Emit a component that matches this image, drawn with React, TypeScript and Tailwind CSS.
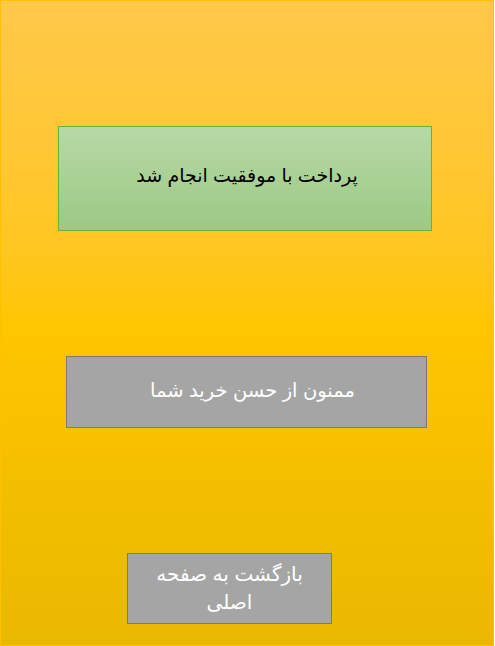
export default function App() {
  return (
    <div
      dir="rtl"
      className="relative w-[494px] h-[646px] border border-[#ffc000] bg-gradient-to-b from-[#ffc848] via-[#ffc600] to-[#e9b800] flex flex-col"
      style={{ fontFamily: '"Liberation Sans", "DejaVu Sans", Arial, sans-serif' }}
    >
      <div dir="ltr" className="flex flex-col pt-[125px]">
        <div className="ml-[57px] w-[374px] h-[105px] border border-[#6aaf4a] bg-gradient-to-b from-[#b7d8a6] to-[#9bca84] flex items-center justify-center">
          <span dir="rtl" className="text-[19px] text-black pl-[4px] pb-[5px]">پرداخت با موفقیت انجام شد</span>
        </div>
        <div className="ml-[65px] mt-[125px] w-[361px] h-[72px] border border-[#7a7a7a] bg-[#a5a5a5] flex items-center justify-center">
          <span dir="rtl" className="text-[19.5px] text-white pl-[12px] pb-[2px]">ممنون از حسن خرید شما</span>
        </div>
        <div className="ml-[126px] mt-[125px] w-[205px] h-[71px] border border-[#7a7a7a] bg-[#a5a5a5] flex items-center justify-center">
          <span dir="rtl" className="text-[20px] leading-[28px] text-white text-center px-3 pb-[2px]">بازگشت به صفحه اصلی</span>
        </div>
      </div>
    </div>
  );
}
